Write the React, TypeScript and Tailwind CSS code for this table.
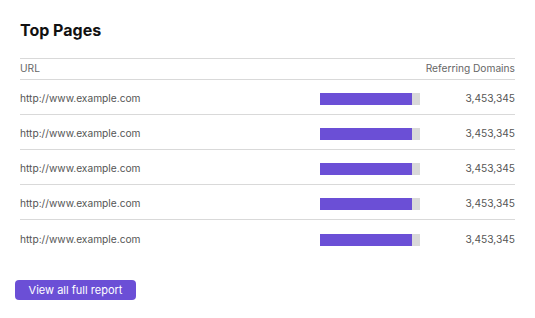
import React from 'react';

const rows = [
  { url: 'http://www.example.com', value: '3,453,345', pct: 92 },
  { url: 'http://www.example.com', value: '3,453,345', pct: 92 },
  { url: 'http://www.example.com', value: '3,453,345', pct: 92 },
  { url: 'http://www.example.com', value: '3,453,345', pct: 92 },
  { url: 'http://www.example.com', value: '3,453,345', pct: 92 },
];

const TopPages = () => {
  return (
    <div className="w-[535px] h-[318px] bg-white" style={{ fontFamily: 'Inter, "Liberation Sans", sans-serif' }}>
      <div className="px-5 pt-[20px]">
        <h2 className="text-[16px] leading-[20px] font-bold text-[#111]">Top Pages</h2>
        <div className="mt-[18px] border-t border-[#d9d9d9]">
          <div className="flex items-center justify-between h-[21px] text-[10.2px] text-[#666] border-b border-[#d9d9d9]">
            <span>URL</span>
            <span>Referring Domains</span>
          </div>
          {rows.map((r, i) => (
            <div
              key={i}
              className={`flex items-center h-[35px] pt-[4px] text-[10.2px] text-[#555] ${i < rows.length - 1 ? 'border-b border-[#d9d9d9]' : ''}`}
            >
              <span className="flex-1">{r.url}</span>
              <div className="w-[100px] h-[12px] bg-[#d9d9d9]">
                <div className="h-full bg-[#6b4fd6]" style={{ width: `${r.pct}%` }} />
              </div>
              <span className="w-[95px] text-right">{r.value}</span>
            </div>
          ))}
        </div>
      </div>
      <div className="px-[15px] mt-[21px]">
        <button className="w-[121px] h-[20px] rounded-[4px] bg-[#6b4fd6] text-white text-[11px] leading-[20px]">
          View all full report
        </button>
      </div>
    </div>
  );
};

export default function App() {
  return <TopPages />;
}
